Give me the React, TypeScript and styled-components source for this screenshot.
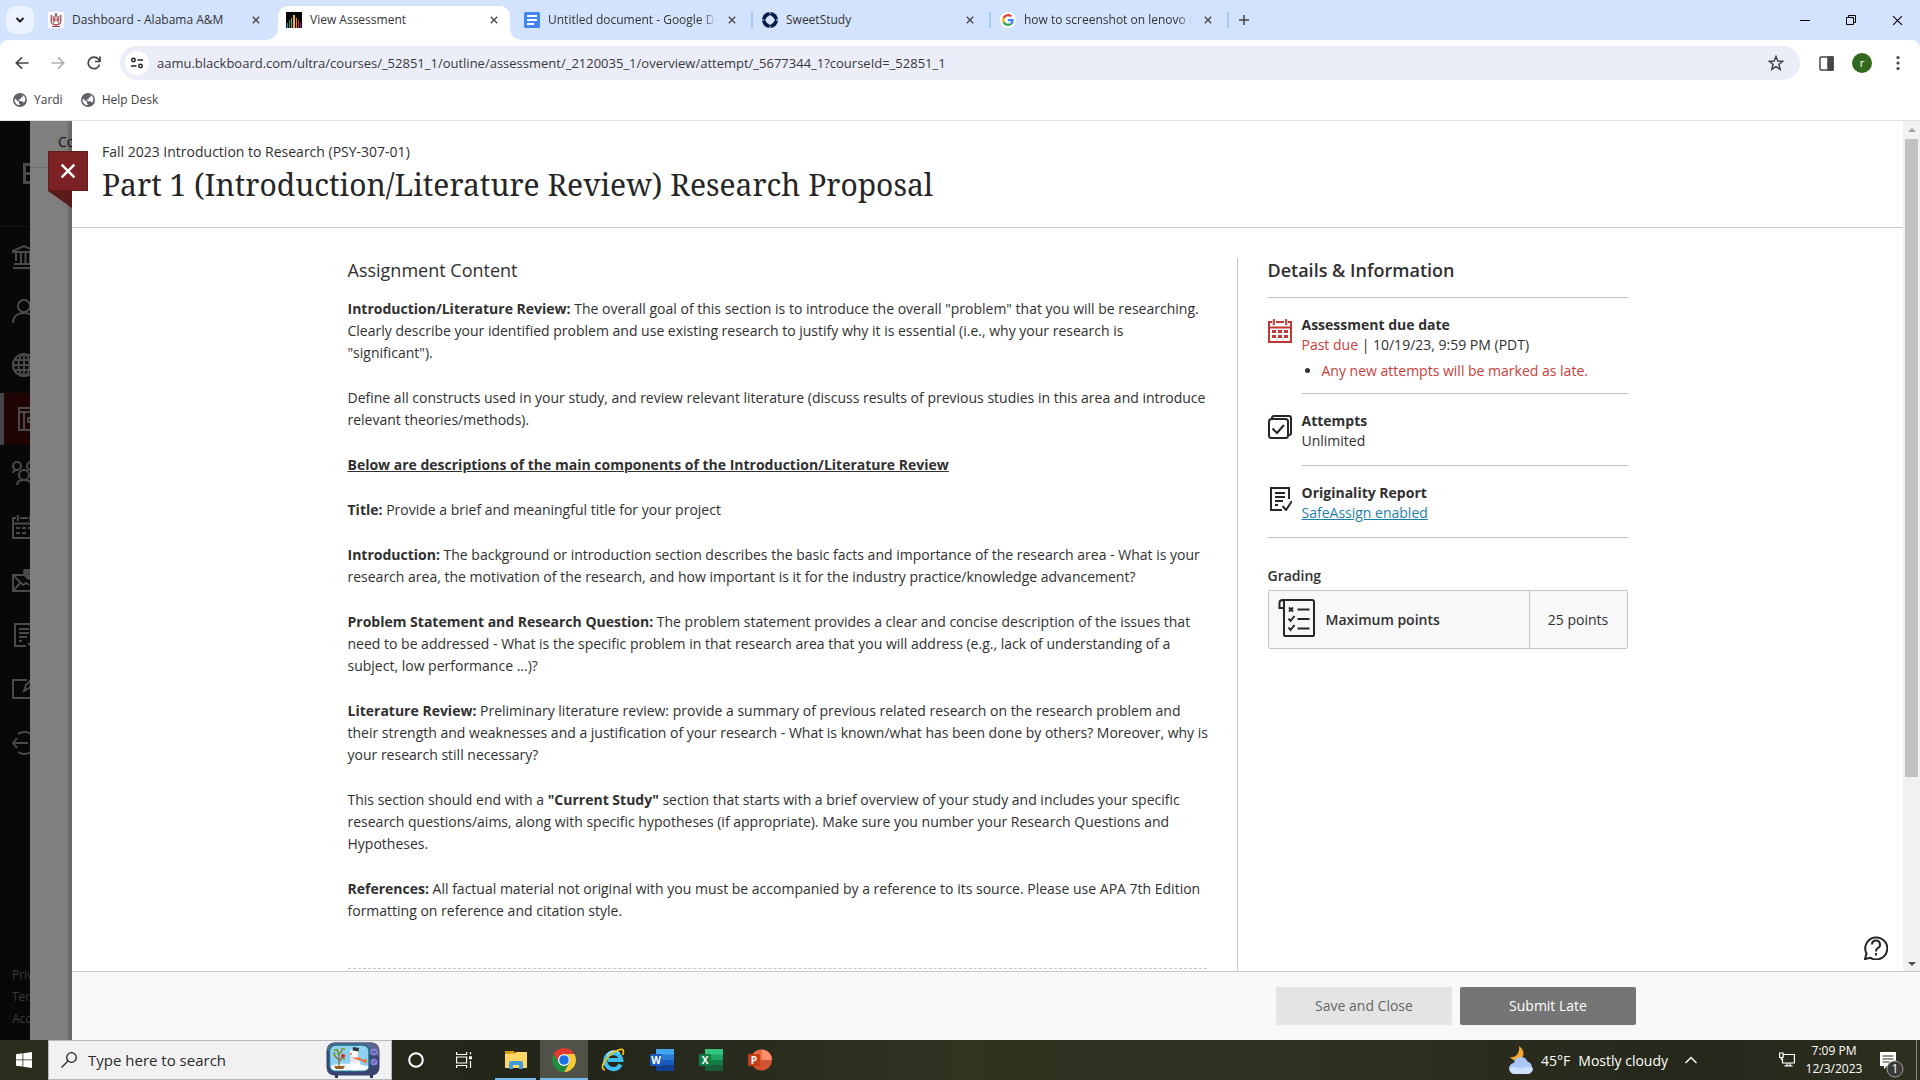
import React from 'react';
import styled, { createGlobalStyle } from 'styled-components';

const GlobalStyle = createGlobalStyle`
  *, *::before, *::after { box-sizing: border-box; }
  html, body { margin: 0; padding: 0; }
  body { font-family: "Open Sans", "Noto Sans", sans-serif; font-size: 14px; color: #303030; background: #fff; }
  button, input { font: inherit; color: inherit; border: 0; padding: 0; margin: 0; background: none; outline: none; }
  button { cursor: pointer; }
  a { color: inherit; text-decoration: none; }
  h1, h2, h3, p, ul { margin: 0; padding: 0; font-weight: 400; }
  svg { display: block; flex: none; }
`;

const Screen = styled.div`
  display: flex;
  flex-direction: column;
  height: 100vh;
  overflow: hidden;
`;

/* ---------- Browser chrome ---------- */

const TabStrip = styled.div`
  display: flex;
  flex: none;
  height: 40px;
  padding-left: 6px;
  background: #d3e3fd;
`;

const TabSearch = styled.button`
  display: grid;
  place-items: center;
  width: 28px;
  height: 28px;
  margin: 6px 6px 0 0;
  border-radius: 10px;
  background: #ecf3fe;
`;

const TabItem = styled.div<{ $active?: boolean }>`
  position: relative;
  display: flex;
  align-items: center;
  gap: 8px;
  width: 232px;
  height: 34px;
  margin: 6px 6px 0 0;
  padding: 0 8px 6px;
  border-radius: 10px 10px 0 0;
  background: ${p => (p.$active ? '#fff' : 'transparent')};

  &::before, &::after {
    content: ${p => (p.$active ? '""' : 'none')};
    position: absolute;
    bottom: 0;
    width: 10px;
    height: 10px;
  }
  &::before { left: -10px; background: radial-gradient(circle at 0 0, transparent 9px, #fff 10px); }
  &::after { right: -10px; background: radial-gradient(circle at 100% 0, transparent 9px, #fff 10px); }
`;

const TabDivider = styled.span`
  position: absolute;
  right: -5px;
  top: 6px;
  width: 2px;
  height: 16px;
  background: #a8c7fa;
`;

const TabTitle = styled.span<{ $fade?: boolean }>`
  flex: 1;
  overflow: hidden;
  white-space: nowrap;
  font-size: 12px;
  line-height: 16px;
  color: #333;
  mask-image: ${p => (p.$fade ? 'linear-gradient(90deg, #000 92%, transparent)' : 'none')};
`;

const IconButton = styled.button<{ $size?: number }>`
  display: grid;
  place-items: center;
  flex: none;
  width: ${p => p.$size || 28}px;
  height: ${p => p.$size || 28}px;
`;

const NewTab = styled(IconButton)`
  margin-top: 6px;
`;

const WindowButtons = styled.div`
  display: flex;
  margin-left: auto;
  & > button { width: 46px; height: 40px; }
`;

const ToolbarWrap = styled.div`
  flex: none;
  background: #d3e3fd;
`;

const Toolbar = styled.div`
  display: flex;
  align-items: center;
  height: 46px;
  gap: 8px;
  padding: 0 8px;
  background: #fff;
  border-radius: 8px 8px 0 0;
`;

const AddressBar = styled.form`
  display: flex;
  flex: 1;
  align-items: center;
  height: 34px;
  margin: 0 4px;
  padding: 0 10px 0 5px;
  border-radius: 17px;
  background: #ebeef8;
`;

const SiteInfo = styled.button`
  display: grid;
  place-items: center;
  width: 24px;
  height: 24px;
  border-radius: 12px;
  background: #fff;
`;

const UrlInput = styled.input`
  flex: 1;
  min-width: 0;
  margin-left: 8px;
  font-size: 13px;
  color: #383838;
`;

const Avatar = styled.button`
  width: 20px;
  height: 20px;
  margin: 0 4px;
  border-radius: 10px;
  background: #33691e;
  color: #fff;
  font-size: 11px;
  line-height: 18px;
`;

const Bookmarks = styled.nav`
  display: flex;
  align-items: center;
  flex: none;
  gap: 18px;
  height: 35px;
  padding: 0 0 6px 13px;
  border-bottom: 1px solid #dfe1e3;
  background: #fff;
`;

const Bookmark = styled.a`
  display: flex;
  align-items: center;
  gap: 7px;
  font-size: 12px;
  line-height: 16px;
  color: #404040;
`;

/* ---------- Blackboard page ---------- */

const Page = styled.div`
  display: flex;
  flex: 1;
  min-height: 0;
`;

const Sidebar = styled.nav`
  display: flex;
  flex-direction: column;
  flex: none;
  width: 30px;
  overflow: hidden;
  background: #080808;
  color: #4a4a4a;
`;

const SidebarLogo = styled.div`
  flex: none;
  height: 106px;
  padding: 42px 0 0 23px;
  border-bottom: 1px solid #151515;
`;

const SideLinks = styled.div`
  display: flex;
  flex-direction: column;
  gap: 2px;
  padding-top: 4px;
`;

const SideLink = styled.a<{ $active?: boolean }>`
  display: flex;
  align-items: center;
  height: 52px;
  padding-left: ${p => (p.$active ? 11 : 12)}px;
  background: ${p => (p.$active ? '#200505' : 'transparent')};
  box-shadow: ${p => (p.$active ? 'inset 4px 0 0 #454545' : 'none')};
`;

const SideFooter = styled.div`
  display: flex;
  flex-direction: column;
  margin-top: auto;
  padding: 0 0 10px 12px;
  font-size: 12px;
  line-height: 22px;
  color: #3c3c3c;
`;

const CourseStrip = styled.div`
  flex: none;
  width: 42px;
  overflow: hidden;
  background: linear-gradient(90deg, #7f7f7f 37px, #6f6f6f 38px, #666 42px);
`;

const CourseTabs = styled.div`
  height: 47px;
  padding: 10px 0 0 28px;
  border-bottom: 1px solid #6e6e6e;
  line-height: 22px;
  color: #131313;
`;

const Panel = styled.main`
  position: relative;
  display: flex;
  flex-direction: column;
  flex: 1;
  min-width: 0;
  background: #fff;
`;

const CloseRibbon = styled.button`
  position: absolute;
  left: -24px;
  top: 30px;
  display: grid;
  place-items: center;
  width: 40px;
  height: 40px;
  background: #7d2224;
  border: 1px solid #651a1c;
  color: #fff;

  &::after {
    content: "";
    position: absolute;
    left: -1px;
    top: 39px;
    border-top: 17px solid #5b1a1b;
    border-left: 24px solid transparent;
  }
`;

const ScrollRow = styled.div`
  display: flex;
  flex: 1;
  min-height: 0;
`;

const Scrolled = styled.div`
  flex: 1;
  min-width: 0;
  overflow: hidden;
`;

const PanelHeader = styled.header`
  height: 107px;
  padding: 20px 30px 0;
  border-bottom: 1px solid #c7c7c7;
`;

const CourseName = styled.p`
  line-height: 22px;
`;

const Title = styled.h1`
  font-family: "Noto Serif", "DejaVu Serif", serif;
  font-size: 30px;
  line-height: 44px;
  color: #262626;
`;

const Columns = styled.div`
  display: flex;
  max-width: 1280px;
  margin: 30px auto 0;
`;

const Content = styled.section`
  flex: 1;
  min-width: 0;
  margin-right: 28px;
`;

const SectionTitle = styled.h2<{ $strong?: boolean }>`
  font-size: 18px;
  line-height: 24px;
  font-weight: ${p => (p.$strong ? 600 : 400)};
`;

const Prose = styled.div`
  display: flex;
  flex-direction: column;
  gap: 23px;
  margin-top: 16px;
  line-height: 22px;
  & strong { font-weight: 700; }
`;

const Divider = styled.hr`
  margin: 46px 2px 0 0;
  border: 0;
  border-top: 1px dashed #c7c7c7;
`;

const Aside = styled.aside`
  flex: none;
  width: 391px;
  height: 740px;
  padding-left: 30px;
  border-left: 1px solid #c7c7c7;
`;

const DetailList = styled.div`
  margin-top: 15px;
  border-top: 1px solid #c7c7c7;
  border-bottom: 1px solid #c7c7c7;
`;

const Detail = styled.div`
  display: flex;
  gap: 10px;
  padding-top: 17px;
`;

const DetailIcon = styled.span`
  padding-top: 4px;
`;

const DetailBody = styled.div<{ $last?: boolean; $tight?: boolean }>`
  flex: 1;
  padding-bottom: ${p => (p.$tight ? 12 : 14)}px;
  border-bottom: ${p => (p.$last ? 'none' : '1px solid #c7c7c7')};
  line-height: 20px;
`;

const DetailName = styled.h3`
  font-size: 14px;
  font-weight: 700;
`;

const Danger = styled.span`
  color: #c9403b;
`;

const Notes = styled.ul`
  margin-top: 6px;
  padding-left: 20px;
`;

const SafeLink = styled.a`
  color: #1f7fac;
  text-decoration: underline;
`;

const GradingTitle = styled.h3`
  margin: 28px 0 4px;
  font-size: 14px;
  line-height: 20px;
  font-weight: 600;
`;

const GradeTable = styled.table`
  width: 100%;
  height: 59px;
  border: 1px solid #c7c7c7;
  border-radius: 2px;
  border-spacing: 0;
  background: #f8f8f8;
  & th, & td { padding: 0; }
  & td { width: 98px; text-align: center; border-left: 1px solid #c7c7c7; }
`;

const GradeName = styled.span`
  display: flex;
  align-items: center;
  gap: 10px;
  padding-left: 9px;
  font-weight: 600;
`;

const HelpButton = styled.button`
  position: absolute;
  right: 32px;
  bottom: 80px;
  width: 24px;
  height: 24px;
`;

const Scrollbar = styled.div`
  display: flex;
  flex-direction: column;
  align-items: center;
  justify-content: space-between;
  flex: none;
  width: 17px;
  padding: 6px 0 4px;
  background: #f1f1f1;
`;

const Thumb = styled.div`
  width: 13px;
  height: 76%;
  margin: 7px 0 auto;
  background: #c1c1c1;
`;

const ActionBar = styled.footer`
  flex: none;
  height: 69px;
  border-top: 1px solid #c7c7c7;
  background: #f8f8f8;
`;

const Actions = styled.div`
  display: flex;
  justify-content: flex-end;
  gap: 8px;
  max-width: 1280px;
  margin: 0 auto;
  padding-top: 15px;
`;

const ActionButton = styled.button<{ $primary?: boolean }>`
  width: 176px;
  height: 38px;
  padding-bottom: 2px;
  border-radius: 2px;
  background: ${p => (p.$primary ? '#757575' : '#e4e4e4')};
  color: ${p => (p.$primary ? '#fff' : '#666')};
`;

/* ---------- Taskbar ---------- */

const Taskbar = styled.div`
  display: flex;
  flex: none;
  height: 40px;
  background: linear-gradient(90deg, #2b2d1d, #23251a 30%, #303421 50%, #2e3120 70%, #24271a 88%, #2d301f);
  color: #fff;
`;

const TaskButton = styled.button<{ $open?: boolean; $active?: boolean; $wide?: boolean }>`
  position: relative;
  display: grid;
  place-items: center;
  width: ${p => (p.$wide ? 49 : 48)}px;
  height: 40px;
  background: ${p => (p.$active ? '#50524a' : 'transparent')};
  &::after {
    content: ${p => (p.$open ? '""' : 'none')};
    position: absolute;
    left: ${p => (p.$active ? 0 : 4)}px;
    right: ${p => (p.$active ? 0 : 4)}px;
    bottom: 0;
    height: 2px;
    background: #76b9ed;
  }
`;

const SearchBox = styled.label`
  display: flex;
  align-items: center;
  width: 344px;
  padding: 0 11px 0 12px;
  border: 1px solid #b9b9b9;
  background: #f1f1f1;
  color: #1a1a1a;
`;

const SearchInput = styled.input`
  flex: 1;
  min-width: 0;
  margin-left: 11px;
  font-size: 15px;
  &::placeholder { color: #2b2b2b; opacity: 1; }
`;

const Apps = styled.div`
  display: flex;
`;

const RunningApps = styled.div`
  display: flex;
  margin-left: 3px;
`;

const Tray = styled.div`
  display: flex;
  align-items: center;
  margin-left: auto;
`;

const Weather = styled.button`
  display: flex;
  align-items: center;
  gap: 8px;
  margin-right: 15px;
  font-size: 14px;
`;

const Clock = styled.button`
  width: 62px;
  margin: 0 14px 0 2px;
  font-size: 12px;
  line-height: 18px;
  white-space: nowrap;
`;

const Network = styled(IconButton)`
  margin-left: 74px;
`;

const ShowDesktop = styled.button`
  width: 4px;
  height: 40px;
  margin-left: 12px;
  border-left: 1px solid #8a8b83;
`;

/* ---------- Icons ---------- */

const Svg = ({ size = 24, w, h, box, children, sw = 2, color = 'currentColor' }: any) => (
  <svg width={w || size} height={h || size} viewBox={box || '0 0 24 24'} fill="none" stroke={color} strokeWidth={sw} aria-hidden="true">
    {children}
  </svg>
);

const Cross = ({ size = 8, sw = 1.6, color = '#444' }: any) => (
  <Svg size={size} box="0 0 10 10" sw={sw} color={color}><path d="M1 1l8 8M9 1l-8 8" /></Svg>
);

const GlobeMark = () => (
  <Svg size={14} box="0 0 14 14" sw={0}>
    <circle cx="7" cy="7" r="7" fill="#5f6368" />
    <path d="M2 5.500L4.600 8 6 8.600v1.800l1.200 1.600C4 12.300 1.500 10 1.600 7zM9.800 2c2.200 1.300 3 3.600 2.300 6L10.600 9.800 9.500 8.200H7.300L5.200 6.300h2.300L8 4.600h1.300z" fill="#fff" />
  </Svg>
);

const AamuIcon = () => (
  <svg width="16" height="16" viewBox="0 0 16 16"><path fill="#fff" d="M0 0h16v16H0z" /><g fill="none" stroke="#9b3a48"><path d="M3.200 3v6.500a4.800 3.500 0 0 0 9.600 0V3" strokeWidth="1.200" /><path d="M8 1L5.500 11.500M8 1l2.500 10.500M6 8h4M5.200 4v5M10.800 4v5" /><path d="M4 14.500h8M8 12v2" /></g></svg>
);

const BbIcon = () => (
  <svg width="16" height="16" viewBox="0 0 16 16" shapeRendering="crispEdges"><path d="M0 0h16v16H0z" fill="#000" /><path d="M1 11h1v5H1z" fill="#1a8fe3" /><path d="M3 8h1v8H3z" fill="#1f9d4d" /><path d="M5 6h1v10H5z" fill="#8fc31f" /><path d="M7 3h2v13H7z" fill="#fdb913" /><path d="M10 6h1v10h-1z" fill="#f47920" /><path d="M12 8h1v8h-1z" fill="#d7263d" /><path d="M14 11h1v5h-1z" fill="#7b2d8e" /></svg>
);

const DocsIcon = () => (
  <svg width="16" height="16" viewBox="0 0 16 16"><rect width="16" height="16" rx="1.500" fill="#4285f4" /><path d="M3 4h10M3 8h10M3 12h7" stroke="#fff" strokeWidth="1.800" /></svg>
);

const SweetIcon = () => (
  <svg width="16" height="16" viewBox="0 0 16 16"><circle cx="8" cy="8" r="8" fill="#071b4b" /><path d="M8 3l3 2 2 3-2 3-3 2-3-2-2-3 2-3z" fill="#d3e3fd" /><path d="M8 0v2M8 14v2M0 8h2M14 8h2" stroke="#d3e3fd" /></svg>
);

const GoogleIcon = () => (
  <svg width="16" height="16" viewBox="0 0 16 16"><circle cx="8" cy="8" r="8" fill="#fff" /><g transform="translate(2 2) scale(.5)"><path fill="#4285f4" d="M23.500 12.300c0-.9-.1-1.500-.2-2.200H12v4.500h6.500c-.2 1.100-.9 2.700-2.400 3.800l3.700 2.900c2.300-2.100 3.700-5.200 3.700-9z" /><path fill="#34a853" d="M12 24c3.200 0 6-1.100 7.900-2.900l-3.700-2.900c-1 .7-2.400 1.200-4.200 1.200-3.200 0-5.900-2.100-6.800-5L1.300 17.300C3.300 21.300 7.300 24 12 24z" /><path fill="#fbbc05" d="M5.200 14.400a7.300 7.300 0 0 1 0-4.700L1.300 6.700a12 12 0 0 0 0 10.700z" /><path fill="#ea4335" d="M12 4.700c2.300 0 3.800 1 4.700 1.800l3.400-3.300C18 1.200 15.200 0 12 0 7.300 0 3.300 2.700 1.300 6.700l3.900 3c1-2.900 3.600-5 6.800-5z" /></g></svg>
);

const CalendarIcon = ({ color }: any) => (
  <Svg color={color}>
    <path d="M4 3H1v20h22V3h-3M8 3h8M1 8.500h22M5.800 0v6M18.200 0v6" />
    <path d="M4 12.500h4M10 12.500h4M16 12.500h4M4 17.500h4M10 17.500h4M16 17.500h4" strokeWidth="3" />
  </Svg>
);

const AttemptsIcon = () => (
  <Svg color="#262626"><rect x="1" y="4" width="19" height="19" rx="2.500" /><path d="M4 4V3a2 2 0 0 1 2-2H21a2 2 0 0 1 2 2v15a2 2 0 0 1-2 2h-1" /><path d="M4.500 13.500l4.500 4.500 7-8" /></Svg>
);

const ReportIcon = () => (
  <Svg color="#262626"><path d="M21 12V1H3v22h11M7 6h10M7 10h10M7 14h8M7 18h3M14.500 19l3.500 4 6-9" /></Svg>
);

const ChecklistIcon = () => (
  <Svg w={38} h={43} box="0 0 38 43" color="#262626">
    <path d="M6 10V37a1 1 0 0 0 1 1h28a1 1 0 0 0 1-1V4a2 2 0 0 0-2-2H4M4 2a3 3 0 0 0-2.500 3v5H6V5A2.500 2.500 0 0 0 4 2z" />
    <path d="M11 9.500l4 4M15 9.500l-4 4M10.500 20.500l2 2.500 4-5M10.500 29.500l2 2.500 4-5M19.500 11.500h12M19.500 21h12M19.500 30.500h12" />
  </Svg>
);

const HelpIcon = () => (
  <Svg color="#262626"><path d="M2.500 17.500L1 23l5.500-1.200A11 11 0 1 0 2.500 17.500z" /><path d="M8 8.500a4 4 0 1 1 6 3.400c-1.400.8-2 1.500-2 3.600M12 17v2.500" /></Svg>
);

const sideIcons = [
  <path key="i" d="M1 6l11-5 11 5v1H1zM4 7v9M9 7v11M13.500 7v11M18 7v11M2 19h20M1 23h22" />,
  <g key="p"><circle cx="12" cy="7" r="6" /><path d="M1 24c0-6 4-10 11-10s11 4 11 10" /></g>,
  <g key="g"><circle cx="12" cy="12" r="11" /><ellipse cx="12" cy="12" rx="5.500" ry="11" /><path d="M12 1v22M1 12h22M3 7h18M3 17h18" /></g>,
  <path key="c" d="M8 1h17v22H8zM8 5h17M13 5v18M17 11h8v4h-8z" />,
  <g key="m"><circle cx="5" cy="5" r="4" /><circle cx="19" cy="5" r="4" /><circle cx="12" cy="14" r="5" /><path d="M1 12c0-2 2-3 4-3M5 24c0-4 3-5 7-5s7 1 7 5" /></g>,
  <path key="d" d="M4 3H1v20h22V3h-3M8 3h8M1 8.500h22M5.800 0v6M18.200 0v6M4 13h4M10 13h4M16 13h4M4 18h4M10 18h4" />,
  <g key="e"><path d="M12 6H1v16h23M1 6l10 10 3-2 3 2M1 22l8-9" /><circle cx="19" cy="3" r="7" fill="currentColor" /></g>,
  <path key="r" d="M21 12V1H3v22h11M7 6h10M7 10h10M7 14h8M7 18h3M16 20l3 3" />,
  <path key="t" d="M15 3H1v18h22v-9M12 14l2-6 8-8 3 3-8 8z" />,
  <path key="s" d="M6 3a11 11 0 1 1 0 18M16 12H1M5 7l-4 5 4 5" />,
];

const ChromeIcon = () => (
  <svg width="24" height="24" viewBox="0 0 24 24"><path fill="#e33b2e" d="M12 6h10.390A12 12 0 0 0 1.610 6L6.800 15A6 6 0 0 1 12 6z" /><path fill="#fcc934" d="M22.390 6A12 12 0 0 1 12 24l5.200-9A6 6 0 0 0 12 6z" /><path fill="#1e8e3e" d="M1.610 6A12 12 0 0 0 12 24l5.200-9A6 6 0 0 1 6.800 15z" /><circle cx="12" cy="12" r="6" fill="#fff" /><circle cx="12" cy="12" r="4.800" fill="#1a73e8" /></svg>
);

const FolderIcon = () => (
  <svg width="22" height="18" viewBox="0 0 22 18"><path fill="#d99a0b" d="M0 0h9l1 2v2H0z" /><path fill="#ffd766" d="M0 3l10-.5L11 1h11v16H0z" /><path fill="#3f9bdc" d="M4 18v-6a2 2 0 0 1 2-2h10a2 2 0 0 1 2 2v6h-4v-4H8v4z" /></svg>
);

const IeIcon = () => (
  <svg width="24" height="24" viewBox="0 0 24 24" fill="none"><path d="M19.500 16.500a8 8 0 1 1 .7-4.500H7" stroke="#3fc0f2" strokeWidth="4.200" /><path d="M19 5.500a8 8 0 0 0-13 2" stroke="#a5e6fb" strokeWidth="1.500" /><path d="M4 22C-1 21 2 14 8 8S22-.5 22.500 3c.2 1.500-.5 3-1 4" stroke="#f5c518" strokeWidth="1.700" /></svg>
);

const OfficeIcon = ({ letter, dark, tones, round }: any) => (
  <svg width="24" height="22" viewBox="0 0 24 22">
    {round
      ? <g><circle cx="13.500" cy="11" r="10.500" fill={tones[2]} /><path d="M13.500.5a10.500 10.500 0 0 1 10.500 10.500H13.500z" fill={tones[0]} /><path d="M13.500.5A10.500 10.500 0 0 0 3 11h10.500z" fill={tones[1]} /></g>
      : <g><path d="M6 0h18v6H6z" fill={tones[0]} /><path d="M6 5.500h18V11H6z" fill={tones[1]} /><path d="M6 11h18v5.500H6z" fill={tones[2]} /><path d="M6 16.500h18V22H6z" fill={tones[3]} /></g>}
    <rect y="5" width="12" height="12" rx="1" fill={dark} />
    <text x="6" y="14.500" textAnchor="middle" fontFamily="Open Sans, sans-serif" fontWeight="700" fontSize="10" fill="#fff">{letter}</text>
  </svg>
);

const SnowTv = () => (
  <svg width="54" height="36" viewBox="0 0 54 36">
    <path d="M9 33h3v3H9zM44 33h3v3h-3z" fill="#2a3460" />
    <rect x=".5" y=".5" width="53" height="33" rx="8" fill="#384471" />
    <path d="M9 .5h36a8 8 0 0 1 8 8v5L1 9a8 8 0 0 1 8-8.500z" fill="#5c6690" />
    <rect x="3.500" y="3" width="39.500" height="26" rx="6" fill="#8fd0ee" stroke="#1d7389" strokeWidth="1.500" />
    <path d="M4.500 24c9-4 28-2 38 0 0 3-2 4.500-4 4.500H9c-3 0-4.500-2-4.500-4.500z" fill="#f3f8ff" />
    <path d="M13 26V14M13 18l-5-5M13 19l6-6M13 14l-2-7M13 13l4-6M9 14l-1-4" stroke="#7c6a3c" strokeWidth="1.200" fill="none" />
    <path d="M8 8h3M15 7h4M7 13h3M11 11h3M17 17h2" stroke="#7cae3d" strokeWidth="2" />
    <path d="M8 24h11l-2 3H10z" fill="#9a5e20" /><circle cx="17" cy="14" r="2" fill="#d42a2a" />
    <circle cx="29" cy="23" r="5.500" fill="#fff" /><circle cx="28.500" cy="16.500" r="4.500" fill="#e9e4fb" /><circle cx="28" cy="11" r="4" fill="#fff" />
    <path d="M27 5l6 1-.5 3.500-6-1z" fill="#353445" /><path d="M25 15c3 1.200 5.500 1 8 .3l4 2.700 4-1-1 4.500-6-3.500c-3 0-6-1-9-3z" fill="#f26b2c" /><path d="M26 11l-3 1 3 1z" fill="#e85b1c" />
    <circle cx="48" cy="10" r="3.500" fill="#8580d6" /><circle cx="48" cy="20" r="3.500" fill="#8580d6" /><path d="M46 10h4M46.500 21.500l3-3" stroke="#3b3b7c" />
  </svg>
);

const WeatherIcon = () => (
  <svg width="24" height="30" viewBox="0 0 24 30"><path d="M10 1c6 4 6 12 0 14-4 1-7 0-9-3 6 1 10-4 9-11z" fill="#f3a72b" /><path d="M6 29a5.500 5.500 0 0 1-1-11 7 7 0 0 1 13.500-1.500A6.500 6.500 0 0 1 18 29z" fill="#a9c6f7" /><path d="M6 29a5 5 0 0 1-5-6c6-3 9 2 13 0s7-1 10 0c0 4-3 6-6 6z" fill="#cfe0fc" /></svg>
);

/* ---------- Data ---------- */

const tabs = [
  { icon: <AamuIcon />, title: 'Dashboard - Alabama A&M' },
  { icon: <BbIcon />, title: 'View Assessment', active: true },
  { icon: <DocsIcon />, title: 'Untitled document - Google Docs', fade: true, divider: true },
  { icon: <SweetIcon />, title: 'SweetStudy', divider: true },
  { icon: <GoogleIcon />, title: 'how to screenshot on lenovo computer', fade: true, divider: true },
];

const paragraphs: [string, string][] = [
  ['Introduction:', ' The background or introduction section describes the basic facts and importance of the research area - What is your research area, the motivation of the research, and how important is it for the industry practice/knowledge advancement?'],
  ['Problem Statement and Research Question:', ' The problem statement provides a clear and concise description of the issues that need to be addressed - What is the specific problem in that research area that you will address (e.g., lack of understanding of a subject, low performance ...)?'],
  ['Literature Review:', ' Preliminary literature review: provide a summary of previous related research on the research problem and their strength and weaknesses and a justification of your research - What is known/what has been done by others? Moreover, why is your research still necessary?'],
];

export default function App() {
  return (
    <Screen>
      <GlobalStyle />
      <TabStrip>
        <TabSearch aria-label="Search tabs"><Svg size={10} box="0 0 10 10" color="#222"><path d="M1.500 3L5 6.500 8.500 3" /></Svg></TabSearch>
        {tabs.map(t => (
          <TabItem key={t.title} $active={t.active}>
            {t.icon}
            <TabTitle $fade={t.fade}>{t.title}</TabTitle>
            <IconButton $size={16} aria-label="Close tab"><Cross /></IconButton>
            {t.divider && <TabDivider />}
          </TabItem>
        ))}
        <NewTab aria-label="New tab"><Svg size={10} box="0 0 10 10" sw={1.5} color="#444"><path d="M5 0v10M0 5h10" /></Svg></NewTab>
        <WindowButtons>
          <IconButton aria-label="Minimize"><Svg size={10} box="0 0 10 10" sw={1} color="#000"><path d="M0 5.500h10" /></Svg></IconButton>
          <IconButton aria-label="Restore"><Svg size={10} box="0 0 10 10" sw={1} color="#000"><path d="M.5 2.500h7v7h-7zM2.500 2.500v-2h7v7h-2" /></Svg></IconButton>
          <IconButton aria-label="Close"><Cross size={11} sw={1} color="#000" /></IconButton>
        </WindowButtons>
      </TabStrip>
      <ToolbarWrap>
        <Toolbar>
          <IconButton aria-label="Back"><Svg size={14} box="0 0 14 14" sw={1.7} color="#444"><path d="M13.500 7H1.500M7 1.300L1.300 7 7 12.700" /></Svg></IconButton>
          <IconButton aria-label="Forward"><Svg size={14} box="0 0 14 14" sw={1.7} color="#b0b0b0"><path d="M.5 7h12M7 1.300L12.700 7 7 12.700" /></Svg></IconButton>
          <IconButton aria-label="Reload"><Svg size={14} box="0 0 14 14" sw={1.7} color="#444"><path d="M12.600 8.500A5.800 5.800 0 1 1 11.500 3.200L13 5M13 .5V5.500H8" /></Svg></IconButton>
          <AddressBar onSubmit={e => e.preventDefault()}>
            <SiteInfo type="button" aria-label="Site information"><Svg size={12} box="0 0 12 12" sw={1.5} color="#222"><circle cx="2.500" cy="3" r="1.700" /><path d="M6.500 3H12M0 9h5.500" /><circle cx="9.500" cy="9" r="1.700" /></Svg></SiteInfo>
            <UrlInput aria-label="Address" defaultValue="aamu.blackboard.com/ultra/courses/_52851_1/outline/assessment/_2120035_1/overview/attempt/_5677344_1?courseId=_52851_1" />
            <IconButton type="button" aria-label="Bookmark this page"><Svg size={16} box="0 0 16 16" sw={1.5} color="#444"><path d="M8 1.500l1.800 4.600 4.900.3-3.800 3.100 1.300 4.900L8 11.700l-4.200 2.700 1.300-4.900L1.300 6.400l4.900-.3z" /></Svg></IconButton>
          </AddressBar>
          <IconButton aria-label="Side panel"><Svg size={15} box="0 0 15 15" sw={1.5} color="#474747"><rect x="1" y="1" width="13" height="13" rx="1" /><path d="M9 1h5v13H9z" fill="#474747" /></Svg></IconButton>
          <Avatar aria-label="Profile">r</Avatar>
          <IconButton aria-label="Menu"><Svg size={16} box="0 0 16 16" sw={0}><g fill="#474747"><circle cx="8" cy="2.500" r="1.600" /><circle cx="8" cy="8" r="1.600" /><circle cx="8" cy="13.500" r="1.600" /></g></Svg></IconButton>
        </Toolbar>
      </ToolbarWrap>
      <Bookmarks>
        <Bookmark href="#"><GlobeMark />Yardi</Bookmark>
        <Bookmark href="#"><GlobeMark />Help Desk</Bookmark>
      </Bookmarks>

      <Page>
        <Sidebar>
          <SidebarLogo><Svg size={21} box="0 0 21 21" sw={3}><path d="M1.500 1.500h14v18h-14zM1.500 10.500h14" /></Svg></SidebarLogo>
          <SideLinks>
            {sideIcons.map((icon, i) => (
              <SideLink key={i} href="#" $active={i === 3}><Svg>{icon}</Svg></SideLink>
            ))}
          </SideLinks>
          <SideFooter><a href="#">Privacy</a><a href="#">Terms</a><a href="#">Accessibility</a></SideFooter>
        </Sidebar>
        <CourseStrip><CourseTabs>Content</CourseTabs></CourseStrip>
        <Panel>
          <ScrollRow>
            <Scrolled>
              <PanelHeader>
                <CourseName>Fall 2023 Introduction to Research (PSY-307-01)</CourseName>
                <Title>Part 1 (Introduction/Literature Review) Research Proposal</Title>
              </PanelHeader>
              <Columns>
                <Content>
                  <SectionTitle>Assignment Content</SectionTitle>
                  <Prose>
                    <p><strong>Introduction/Literature Review:</strong> The overall goal of this section is to introduce the overall "problem" that you will be researching. Clearly describe your identified problem and use existing research to justify why it is essential (i.e., why your research is "significant").</p>
                    <p>Define all constructs used in your study, and review relevant literature (discuss results of previous studies in this area and introduce relevant theories/methods).</p>
                    <p><strong><u>Below are descriptions of the main components of the Introduction/Literature Review</u></strong></p>
                    <p><strong>Title:</strong> Provide a brief and meaningful title for your project</p>
                    {paragraphs.map(([lead, text]) => <p key={lead}><strong>{lead}</strong>{text}</p>)}
                    <p>This section should end with a <strong>"Current Study"</strong> section that starts with a brief overview of your study and includes your specific research questions/aims, along with specific hypotheses (if appropriate). Make sure you number your Research Questions and Hypotheses.</p>
                    <p><strong>References:</strong> All factual material not original with you must be accompanied by a reference to its source. Please use APA 7th Edition formatting on reference and citation style.</p>
                  </Prose>
                  <Divider />
                </Content>
                <Aside>
                  <SectionTitle $strong>Details &amp; Information</SectionTitle>
                  <DetailList>
                    <Detail>
                      <DetailIcon><CalendarIcon color="#c23934" /></DetailIcon>
                      <DetailBody $tight>
                        <DetailName>Assessment due date</DetailName>
                        <p><Danger>Past due</Danger> | 10/19/23, 9:59 PM (PDT)</p>
                        <Notes><li><Danger>Any new attempts will be marked as late.</Danger></li></Notes>
                      </DetailBody>
                    </Detail>
                    <Detail>
                      <DetailIcon><AttemptsIcon /></DetailIcon>
                      <DetailBody><DetailName>Attempts</DetailName><p>Unlimited</p></DetailBody>
                    </Detail>
                    <Detail>
                      <DetailIcon><ReportIcon /></DetailIcon>
                      <DetailBody $last><DetailName>Originality Report</DetailName><SafeLink href="#">SafeAssign enabled</SafeLink></DetailBody>
                    </Detail>
                  </DetailList>
                  <GradingTitle>Grading</GradingTitle>
                  <GradeTable>
                    <tbody>
                      <tr>
                        <th scope="row"><GradeName><ChecklistIcon />Maximum points</GradeName></th>
                        <td>25 points</td>
                      </tr>
                    </tbody>
                  </GradeTable>
                </Aside>
              </Columns>
            </Scrolled>
            <Scrollbar aria-hidden="true">
              <Svg w={8} h={5} box="0 0 8 5" sw={0}><path d="M0 5l4-4 4 4z" fill="#a3a3a3" /></Svg>
              <Thumb />
              <Svg w={8} h={5} box="0 0 8 5" sw={0}><path d="M0 0l4 4 4-4z" fill="#505050" /></Svg>
            </Scrollbar>
          </ScrollRow>
          <ActionBar>
            <Actions>
              <ActionButton>Save and Close</ActionButton>
              <ActionButton $primary>Submit Late</ActionButton>
            </Actions>
          </ActionBar>
          <CloseRibbon aria-label="Close"><Cross size={16} sw={1.5} color="#fff" /></CloseRibbon>
          <HelpButton aria-label="Help"><HelpIcon /></HelpButton>
        </Panel>
      </Page>

      <Taskbar>
        <TaskButton aria-label="Start"><svg width="16" height="16" viewBox="0 0 16 16" fill="#fff"><path d="M0 2.200l6.500-.9v6.200H0zM7.300 1.200L16 0v7.500H7.300zM0 8.300h6.500v6.300L0 13.700zM7.300 8.300H16V16l-8.700-1.200z" /></svg></TaskButton>
        <SearchBox>
          <Svg size={16} box="0 0 16 16" sw={1.3} color="#222"><circle cx="10.500" cy="5.500" r="4.800" /><path d="M7 9L.5 15.500" /></Svg>
          <SearchInput type="text" aria-label="Search" placeholder="Type here to search" />
          <SnowTv />
        </SearchBox>
        <Apps>
          <TaskButton aria-label="Cortana"><Svg size={16} box="0 0 16 16" color="#fff"><circle cx="8" cy="8" r="6.800" /></Svg></TaskButton>
          <TaskButton aria-label="Task view"><Svg size={16} box="0 0 16 16" sw={1.2} color="#fff"><path d="M.600 0v2.500h10V0M.600 5h10v6h-10zM.600 16v-2.500h10V16M14.500 0v2.500M14.500 9v7" /><path d="M13 5.800h3" strokeWidth="3" /></Svg></TaskButton>
          <RunningApps>
            <TaskButton $wide $open aria-label="File Explorer"><FolderIcon /></TaskButton>
            <TaskButton $open $active aria-label="Chrome"><ChromeIcon /></TaskButton>
            <TaskButton $wide aria-label="Internet Explorer"><IeIcon /></TaskButton>
            <TaskButton $wide aria-label="Word"><OfficeIcon letter="W" dark="#185abd" tones={['#41a5ee', '#2b7cd3', '#185abd', '#103f91']} /></TaskButton>
            <TaskButton $wide aria-label="Excel"><OfficeIcon letter="X" dark="#107c41" tones={['#33c481', '#21a366', '#107c41', '#185c37']} /></TaskButton>
            <TaskButton $wide aria-label="PowerPoint"><OfficeIcon letter="P" dark="#c43e1c" tones={['#ff8f6b', '#ed6c47', '#d35230']} round /></TaskButton>
          </RunningApps>
        </Apps>
        <Tray>
          <Weather><WeatherIcon /><span>45°F</span><span>Mostly cloudy</span></Weather>
          <IconButton $size={16} aria-label="Show hidden icons"><Svg size={12} box="0 0 12 12" sw={1.3}><path d="M.5 9L6 3.500 11.500 9" /></Svg></IconButton>
          <Network aria-label="Network"><Svg size={16} box="0 0 16 16" sw={1.2}><path d="M4.500 2.500H15.400v8.500H3.500V6.500M8 11v2.500M11 11v2.500M5.500 13.800h8M.6 1h3.500v4.500H.6zM2.400 5.500V8" /></Svg></Network>
          <Clock>7:09 PM<br />12/3/2023</Clock>
          <IconButton $size={25} aria-label="Notifications">
            <svg width="25" height="32" viewBox="0 0 25 32"><path d="M1 4h16v14H8l-3 3v-3H1z" fill="#fff" /><path d="M3.500 8h11M3.500 11h11M3.500 14h7" stroke="#2a2c1e" /><circle cx="16" cy="21" r="8" fill="#3a3b38" stroke="#9b9b9b" /><text x="16" y="25" textAnchor="middle" fontFamily="Open Sans, sans-serif" fontSize="12" fill="#fff">1</text></svg>
          </IconButton>
          <ShowDesktop aria-label="Show desktop" />
        </Tray>
      </Taskbar>
    </Screen>
  );
}
